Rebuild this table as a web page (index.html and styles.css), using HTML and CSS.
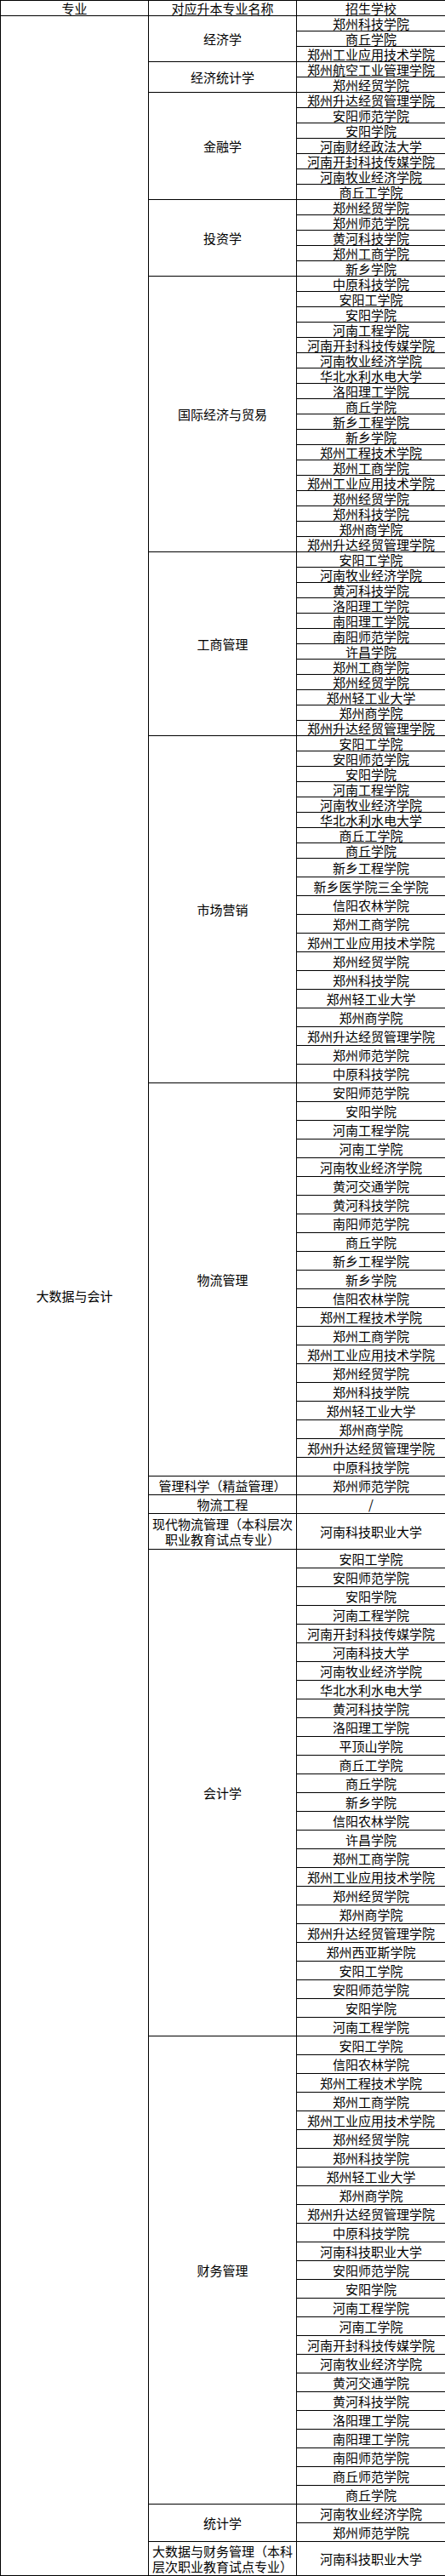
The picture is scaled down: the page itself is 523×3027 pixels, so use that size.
FILE: index.html
```html
<!DOCTYPE html>
<html lang="zh-CN">
<head>
<meta charset="utf-8">
<title>大数据与会计 对应升本专业</title>
<link rel="stylesheet" href="styles.css">
</head>
<body>
<table class="grid">
<colgroup><col class="c1"><col class="c2"><col class="c3"></colgroup>
<thead>
<tr class="a"><th>专业</th><th>对应升本专业名称</th><th>招生学校</th></tr>
</thead>
<tbody>
<tr class="a"><td rowspan="145">大数据与会计</td><td rowspan="3">经济学</td><td>郑州科技学院</td></tr>
<tr class="a"><td>商丘学院</td></tr>
<tr class="a"><td>郑州工业应用技术学院</td></tr>
<tr class="a"><td rowspan="2">经济统计学</td><td>郑州航空工业管理学院</td></tr>
<tr class="a"><td>郑州经贸学院</td></tr>
<tr class="a"><td rowspan="7">金融学</td><td>郑州升达经贸管理学院</td></tr>
<tr class="a"><td>安阳师范学院</td></tr>
<tr class="a"><td>安阳学院</td></tr>
<tr class="a"><td>河南财经政法大学</td></tr>
<tr class="a"><td>河南开封科技传媒学院</td></tr>
<tr class="a"><td>河南牧业经济学院</td></tr>
<tr class="a"><td>商丘工学院</td></tr>
<tr class="a"><td rowspan="5">投资学</td><td>郑州经贸学院</td></tr>
<tr class="a"><td>郑州师范学院</td></tr>
<tr class="a"><td>黄河科技学院</td></tr>
<tr class="a"><td>郑州工商学院</td></tr>
<tr class="a"><td>新乡学院</td></tr>
<tr class="a"><td rowspan="18">国际经济与贸易</td><td>中原科技学院</td></tr>
<tr class="a"><td>安阳工学院</td></tr>
<tr class="a"><td>安阳学院</td></tr>
<tr class="a"><td>河南工程学院</td></tr>
<tr class="a"><td>河南开封科技传媒学院</td></tr>
<tr class="a"><td>河南牧业经济学院</td></tr>
<tr class="a"><td>华北水利水电大学</td></tr>
<tr class="a"><td>洛阳理工学院</td></tr>
<tr class="a"><td>商丘学院</td></tr>
<tr class="a"><td>新乡工程学院</td></tr>
<tr class="a"><td>新乡学院</td></tr>
<tr class="a"><td>郑州工程技术学院</td></tr>
<tr class="a"><td>郑州工商学院</td></tr>
<tr class="a"><td>郑州工业应用技术学院</td></tr>
<tr class="a"><td>郑州经贸学院</td></tr>
<tr class="a"><td>郑州科技学院</td></tr>
<tr class="a"><td>郑州商学院</td></tr>
<tr class="a"><td>郑州升达经贸管理学院</td></tr>
<tr class="a"><td rowspan="12">工商管理</td><td>安阳工学院</td></tr>
<tr class="a"><td>河南牧业经济学院</td></tr>
<tr class="a"><td>黄河科技学院</td></tr>
<tr class="a"><td>洛阳理工学院</td></tr>
<tr class="a"><td>南阳理工学院</td></tr>
<tr class="a"><td>南阳师范学院</td></tr>
<tr class="a"><td>许昌学院</td></tr>
<tr class="a"><td>郑州工商学院</td></tr>
<tr class="a"><td>郑州经贸学院</td></tr>
<tr class="a"><td>郑州轻工业大学</td></tr>
<tr class="a"><td>郑州商学院</td></tr>
<tr class="a"><td>郑州升达经贸管理学院</td></tr>
<tr class="a"><td rowspan="20">市场营销</td><td>安阳工学院</td></tr>
<tr class="a"><td>安阳师范学院</td></tr>
<tr class="a"><td>安阳学院</td></tr>
<tr class="a"><td>河南工程学院</td></tr>
<tr class="a"><td>河南牧业经济学院</td></tr>
<tr class="a"><td>华北水利水电大学</td></tr>
<tr class="a"><td>商丘工学院</td></tr>
<tr class="a"><td>商丘学院</td></tr>
<tr class="b"><td>新乡工程学院</td></tr>
<tr class="b"><td>新乡医学院三全学院</td></tr>
<tr class="b"><td>信阳农林学院</td></tr>
<tr class="b"><td>郑州工商学院</td></tr>
<tr class="b"><td>郑州工业应用技术学院</td></tr>
<tr class="b"><td>郑州经贸学院</td></tr>
<tr class="b"><td>郑州科技学院</td></tr>
<tr class="b"><td>郑州轻工业大学</td></tr>
<tr class="b"><td>郑州商学院</td></tr>
<tr class="b"><td>郑州升达经贸管理学院</td></tr>
<tr class="b"><td>郑州师范学院</td></tr>
<tr class="b"><td>中原科技学院</td></tr>
<tr class="b"><td rowspan="21">物流管理</td><td>安阳师范学院</td></tr>
<tr class="b"><td>安阳学院</td></tr>
<tr class="b"><td>河南工程学院</td></tr>
<tr class="b"><td>河南工学院</td></tr>
<tr class="b"><td>河南牧业经济学院</td></tr>
<tr class="b"><td>黄河交通学院</td></tr>
<tr class="b"><td>黄河科技学院</td></tr>
<tr class="b"><td>南阳师范学院</td></tr>
<tr class="b"><td>商丘学院</td></tr>
<tr class="b"><td>新乡工程学院</td></tr>
<tr class="b"><td>新乡学院</td></tr>
<tr class="b"><td>信阳农林学院</td></tr>
<tr class="b"><td>郑州工程技术学院</td></tr>
<tr class="b"><td>郑州工商学院</td></tr>
<tr class="b"><td>郑州工业应用技术学院</td></tr>
<tr class="b"><td>郑州经贸学院</td></tr>
<tr class="b"><td>郑州科技学院</td></tr>
<tr class="b"><td>郑州轻工业大学</td></tr>
<tr class="b"><td>郑州商学院</td></tr>
<tr class="b"><td>郑州升达经贸管理学院</td></tr>
<tr class="b"><td>中原科技学院</td></tr>
<tr class="b"><td>管理科学（精益管理）</td><td>郑州师范学院</td></tr>
<tr class="b"><td>物流工程</td><td>/</td></tr>
<tr class="c"><td>现代物流管理（本科层次职业教育试点专业）</td><td>河南科技职业大学</td></tr>
<tr class="b"><td rowspan="26">会计学</td><td>安阳工学院</td></tr>
<tr class="b"><td>安阳师范学院</td></tr>
<tr class="b"><td>安阳学院</td></tr>
<tr class="b"><td>河南工程学院</td></tr>
<tr class="b"><td>河南开封科技传媒学院</td></tr>
<tr class="b"><td>河南科技大学</td></tr>
<tr class="b"><td>河南牧业经济学院</td></tr>
<tr class="b"><td>华北水利水电大学</td></tr>
<tr class="b"><td>黄河科技学院</td></tr>
<tr class="b"><td>洛阳理工学院</td></tr>
<tr class="b"><td>平顶山学院</td></tr>
<tr class="b"><td>商丘工学院</td></tr>
<tr class="b"><td>商丘学院</td></tr>
<tr class="b"><td>新乡学院</td></tr>
<tr class="b"><td>信阳农林学院</td></tr>
<tr class="b"><td>许昌学院</td></tr>
<tr class="b"><td>郑州工商学院</td></tr>
<tr class="b"><td>郑州工业应用技术学院</td></tr>
<tr class="b"><td>郑州经贸学院</td></tr>
<tr class="b"><td>郑州商学院</td></tr>
<tr class="b"><td>郑州升达经贸管理学院</td></tr>
<tr class="b"><td>郑州西亚斯学院</td></tr>
<tr class="b"><td>安阳工学院</td></tr>
<tr class="b"><td>安阳师范学院</td></tr>
<tr class="b"><td>安阳学院</td></tr>
<tr class="b"><td>河南工程学院</td></tr>
<tr class="b"><td rowspan="25">财务管理</td><td>安阳工学院</td></tr>
<tr class="b"><td>信阳农林学院</td></tr>
<tr class="b"><td>郑州工程技术学院</td></tr>
<tr class="b"><td>郑州工商学院</td></tr>
<tr class="b"><td>郑州工业应用技术学院</td></tr>
<tr class="b"><td>郑州经贸学院</td></tr>
<tr class="b"><td>郑州科技学院</td></tr>
<tr class="b"><td>郑州轻工业大学</td></tr>
<tr class="b"><td>郑州商学院</td></tr>
<tr class="b"><td>郑州升达经贸管理学院</td></tr>
<tr class="b"><td>中原科技学院</td></tr>
<tr class="b"><td>河南科技职业大学</td></tr>
<tr class="b"><td>安阳师范学院</td></tr>
<tr class="b"><td>安阳学院</td></tr>
<tr class="b"><td>河南工程学院</td></tr>
<tr class="b"><td>河南工学院</td></tr>
<tr class="b"><td>河南开封科技传媒学院</td></tr>
<tr class="b"><td>河南牧业经济学院</td></tr>
<tr class="b"><td>黄河交通学院</td></tr>
<tr class="b"><td>黄河科技学院</td></tr>
<tr class="b"><td>洛阳理工学院</td></tr>
<tr class="b"><td>南阳理工学院</td></tr>
<tr class="b"><td>南阳师范学院</td></tr>
<tr class="b"><td>商丘师范学院</td></tr>
<tr class="b"><td>商丘学院</td></tr>
<tr class="b"><td rowspan="2">统计学</td><td>河南牧业经济学院</td></tr>
<tr class="b"><td>郑州师范学院</td></tr>
<tr class="d"><td>大数据与财务管理（本科层次职业教育试点专业）</td><td>河南科技职业大学</td></tr>
</tbody>
</table>
</body>
</html>
```

FILE: styles.css
```css
html, body {
  margin: 0;
  padding: 0;
  background: #fff;
}

.grid {
  border-collapse: collapse;
  table-layout: fixed;
  width: 523px;
  color: #000;
  font-family: "Noto Sans CJK SC", sans-serif;
  font-size: 15px;
  line-height: 17px;
}

.c1, .c2 { width: 174px; }
.c3 { width: 175px; }

.grid th,
.grid td {
  border: 1px solid #000;
  padding: 0;
  text-align: center;
  vertical-align: middle;
  font-weight: normal;
}

.grid tr.a { height: 18px; }
.grid tr.b { height: 22px; }
.grid tr.c { height: 42px; }
.grid tr.d { height: 40px; }

.grid tr.c td,
.grid tr.d td {
  line-height: 18px;
}
```
